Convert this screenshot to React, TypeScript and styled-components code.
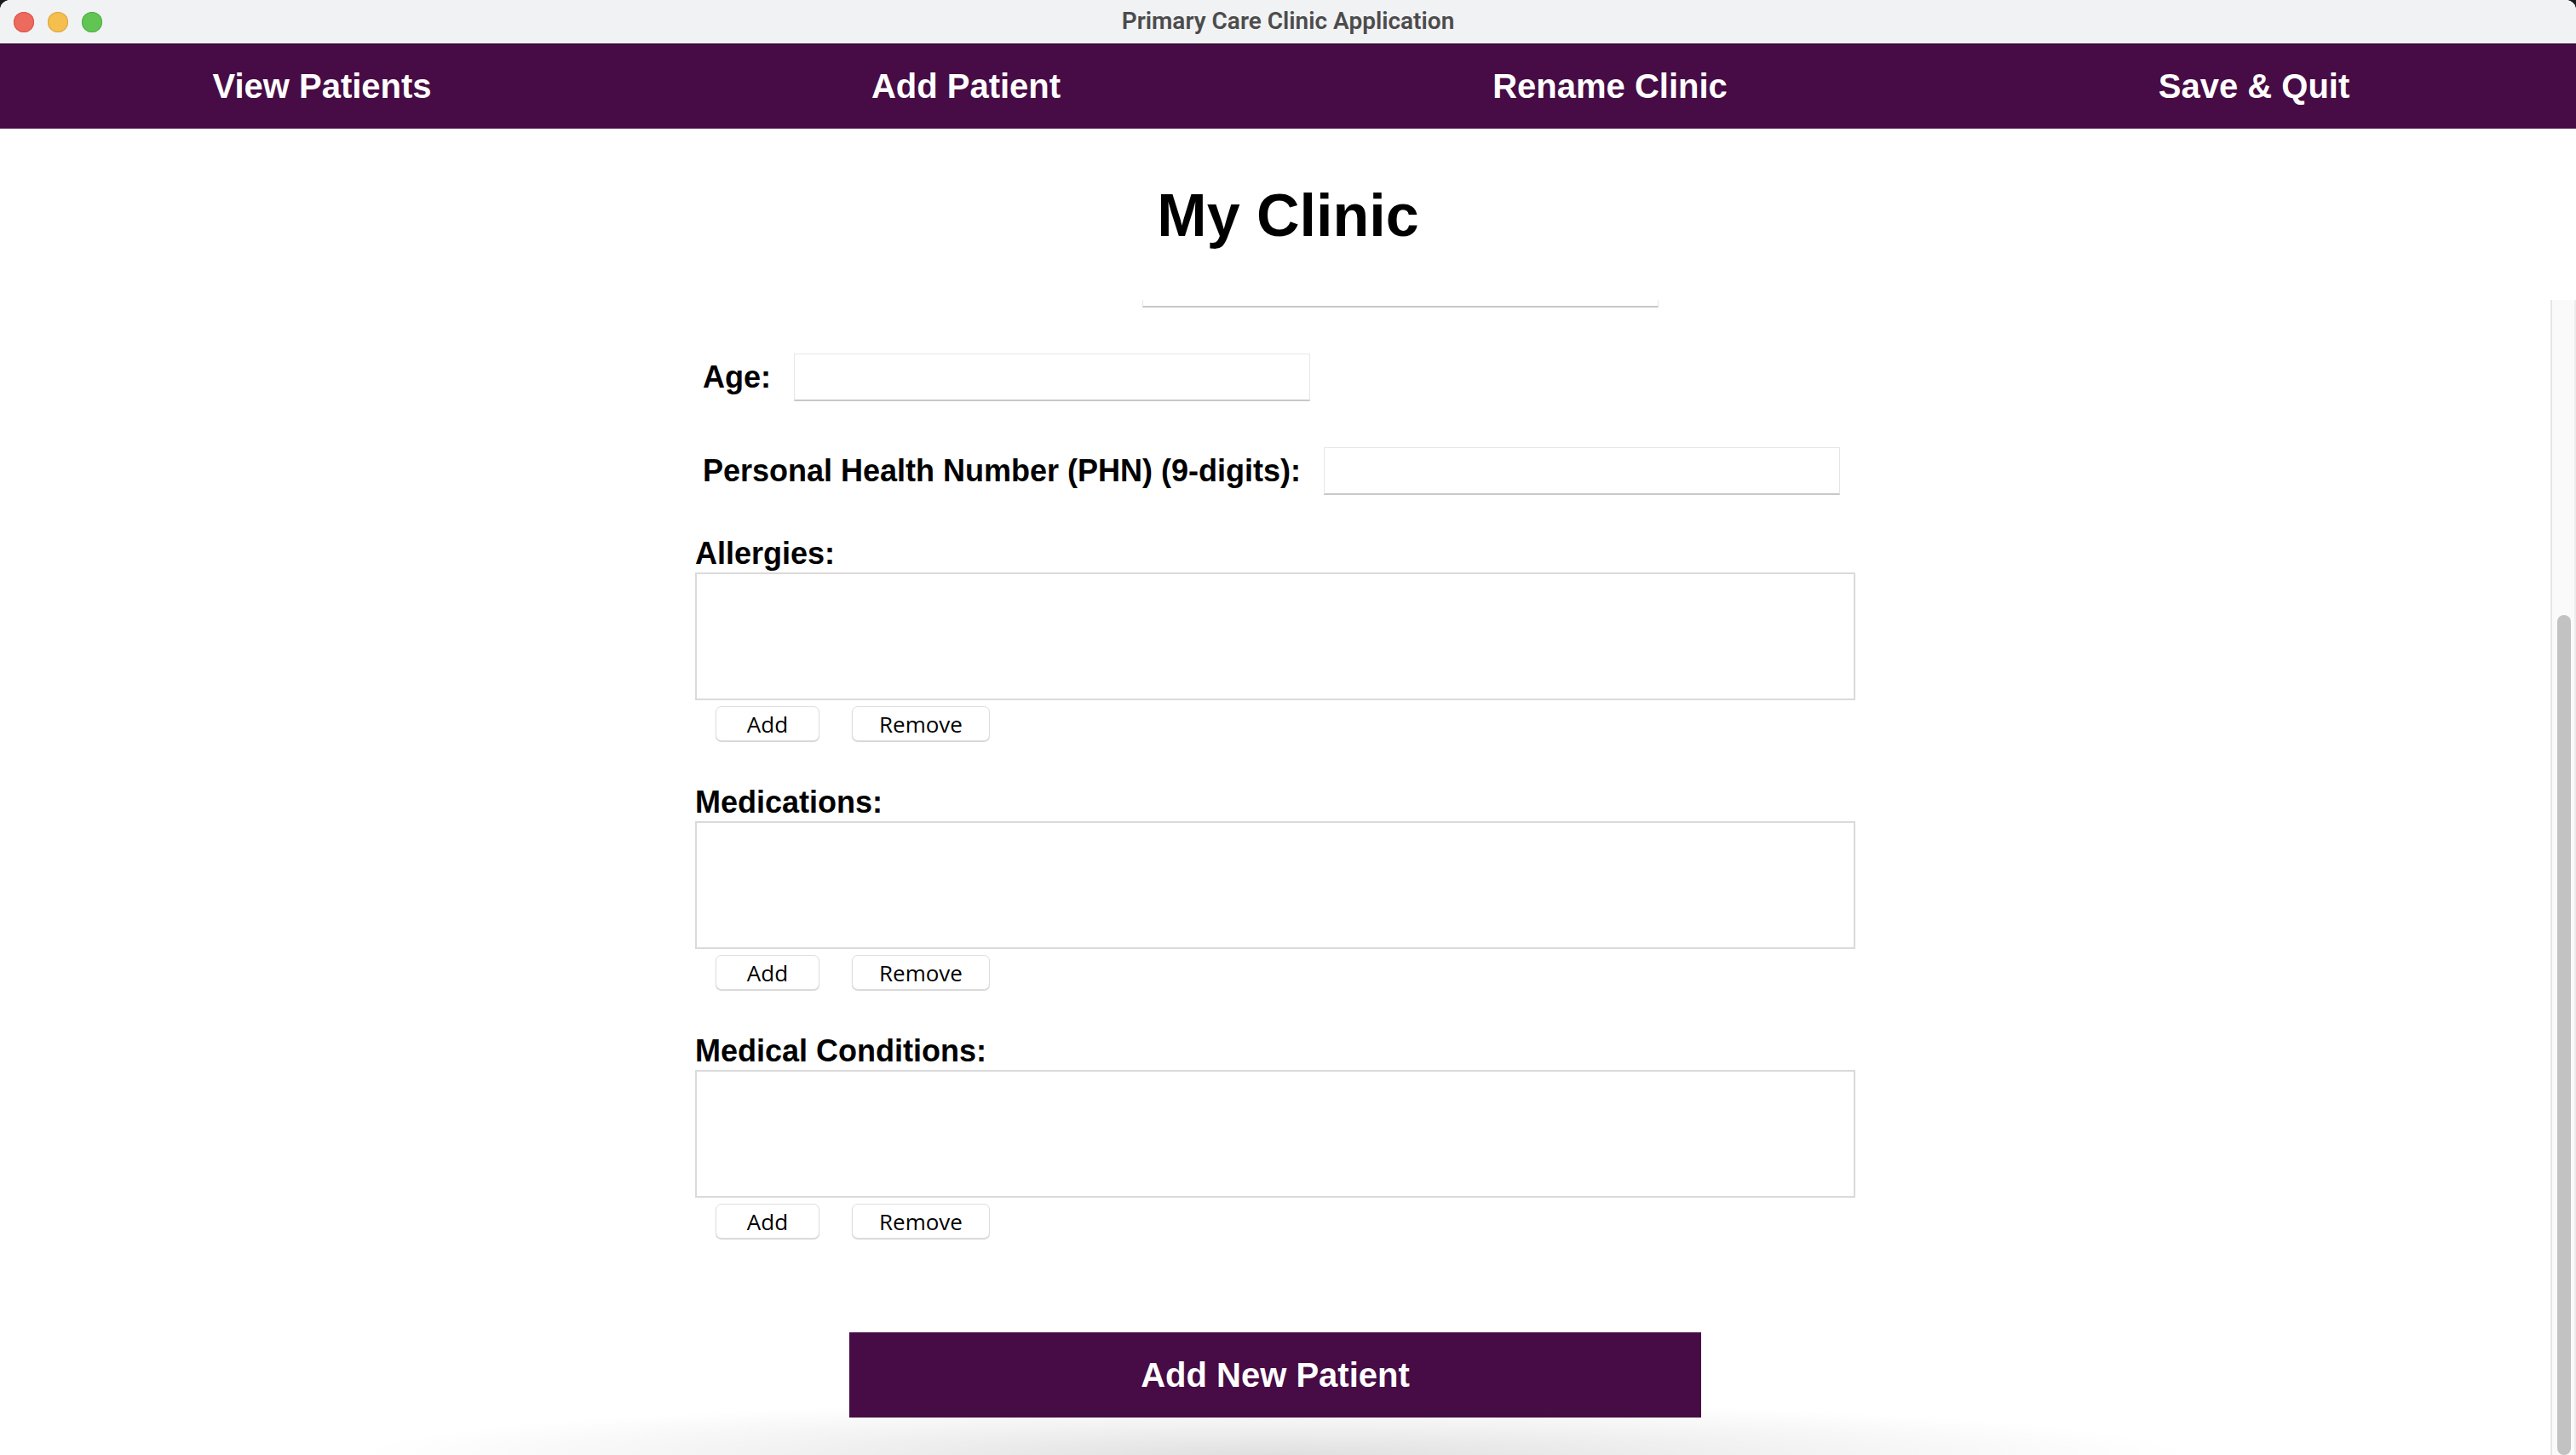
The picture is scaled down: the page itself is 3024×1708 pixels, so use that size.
import {useLayoutEffect, useRef, useState} from 'react';
import styled, {createGlobalStyle} from 'styled-components';

const purple = '#470c45';

const GlobalStyle = createGlobalStyle`
  html, body {
    margin: 0;
    height: 100%;
    background: #1b1b1b;
  }
  #root {
    height: 100%;
  }
  body {
    font-family: "Liberation Sans", Arial, sans-serif;
  }
`;

const Window = styled.div`
  height: 100vh;
  display: flex;
  flex-direction: column;
  background: #ffffff;
  border-radius: 12px 12px 0 0;
  overflow: hidden;
`;

const TitleBar = styled.div`
  height: 52px;
  flex-shrink: 0;
  display: grid;
  grid-template-columns: 1fr auto 1fr;
  align-items: center;
  padding: 0 16px;
  background: #f1f2f4;
  border-bottom: 1px solid #2a0627;
  box-sizing: border-box;
`;

const Lights = styled.div`
  display: flex;
  gap: 16px;
`;

const Light = styled.span<{color: string; edge: string}>`
  width: 24px;
  height: 24px;
  border-radius: 50%;
  background: ${p => p.color};
  box-shadow: inset 0 0 0 1px ${p => p.edge};
`;

const WindowTitle = styled.div`
  font-family: Roboto, "Liberation Sans", sans-serif;
  font-weight: 600;
  font-size: 28px;
  color: #4c4c4c;
  margin-top: -3px;
`;

const NavBar = styled.nav`
  height: 99px;
  flex-shrink: 0;
  display: grid;
  grid-template-columns: repeat(4, 1fr);
  align-items: center;
  background: ${purple};
`;

const NavItem = styled.button`
  background: none;
  border: none;
  color: #ffffff;
  font-family: "Liberation Sans", Arial, sans-serif;
  font-weight: 700;
  font-size: 40px;
  cursor: pointer;
`;

const HeadingArea = styled.header`
  height: 201px;
  flex-shrink: 0;
  box-sizing: border-box;
  padding-top: 62px;
  text-align: center;
  h1 {
    margin: 0;
    font-size: 70px;
    font-weight: 700;
    line-height: normal;
    color: #000;
  }
`;

const PaneWrap = styled.div`
  flex: 1;
  min-height: 0;
  display: flex;
  position: relative;
  &::after {
    content: '';
    position: absolute;
    left: 0;
    right: 30px;
    bottom: 0;
    height: 64px;
    pointer-events: none;
    background: radial-gradient(
      ellipse 36% 100% at 50% 100%,
      rgba(0, 0, 0, 0.12) 0%,
      rgba(0, 0, 0, 0.05) 55%,
      rgba(0, 0, 0, 0) 100%
    );
  }
`;

const ScrollPane = styled.div`
  flex: 1;
  min-width: 0;
  overflow-y: scroll;
  scrollbar-width: none;
  &::-webkit-scrollbar {
    display: none;
  }
`;

const ScrollTrack = styled.div`
  width: 30px;
  flex-shrink: 0;
  box-sizing: border-box;
  position: relative;
  background: #fafafa;
  border-left: 2px solid #e6e6e6;
  border-right: 2px solid #ececec;
`;

const ScrollThumb = styled.div`
  position: absolute;
  left: 6px;
  width: 16px;
  border-radius: 8px;
  background: #c2c2c2;
`;

const Content = styled.div`
  display: flex;
  flex-direction: column;
  align-items: center;
  padding: 22px 0 44px;
`;

const FieldGroup = styled.div`
  width: 1362px;
  box-sizing: border-box;
  padding-left: 9px;
  display: flex;
  flex-direction: column;
  align-items: flex-start;
  gap: 54px;
`;

const FieldRow = styled.div`
  display: flex;
  align-items: center;
  gap: 27px;
`;

const Label = styled.label`
  font-size: 36px;
  font-weight: 700;
  line-height: 40px;
  color: #000;
`;

const TextField = styled.input`
  width: 606px;
  height: 56px;
  box-sizing: border-box;
  border: 1px solid #e6e6e6;
  border-bottom: 2px solid #c8c8c8;
  background: #ffffff;
  outline: none;
`;

const Sections = styled.div`
  margin-top: 49px;
  display: flex;
  flex-direction: column;
  gap: 52px;
`;

const ListSection = styled.section`
  width: 1362px;
  display: flex;
  flex-direction: column;
  ${Label} {
    margin-bottom: 2px;
  }
`;

const ListBox = styled.textarea`
  display: block;
  width: 100%;
  height: 150px;
  box-sizing: border-box;
  border: 2px solid #dadada;
  resize: none;
  outline: none;
  background: #ffffff;
`;

const ButtonRow = styled.div`
  display: flex;
  gap: 38px;
  padding-left: 24px;
  margin-top: 7px;
`;

const SmallButton = styled.button`
  height: 41px;
  min-width: 122px;
  padding: 0 31px;
  box-sizing: border-box;
  font-family: "Open Sans", "Noto Sans", sans-serif;
  font-size: 26px;
  color: #000;
  background: #ffffff;
  border: 1px solid #dedede;
  border-radius: 7px;
  box-shadow: 0 1px 1px rgba(0, 0, 0, 0.18);
  display: flex;
  align-items: center;
  justify-content: center;
`;

const SubmitButton = styled.button`
  margin-top: 110px;
  width: 1000px;
  height: 100px;
  border: none;
  background: ${purple};
  color: #ffffff;
  font-family: "Liberation Sans", Arial, sans-serif;
  font-weight: 700;
  font-size: 40px;
`;

const hiddenFields = ['First Name:', 'Last Name:', 'Sex:', 'Address:', 'Date of Birth - YYYY-MM-DD:'];
const fields = [...hiddenFields, 'Age:', 'Personal Health Number (PHN) (9-digits):'];
const lists = ['Allergies:', 'Medications:', 'Medical Conditions:'];
const navItems = ['View Patients', 'Add Patient', 'Rename Clinic', 'Save & Quit'];

function App() {
  const paneRef = useRef<HTMLDivElement>(null);
  const [thumb, setThumb] = useState({top: 0, height: 0});

  const updateThumb = () => {
    const pane = paneRef.current;
    if (!pane) return;
    const track = pane.clientHeight;
    setThumb({
      top: (pane.scrollTop / pane.scrollHeight) * track,
      height: (pane.clientHeight / pane.scrollHeight) * track,
    });
  };

  useLayoutEffect(() => {
    const pane = paneRef.current;
    if (pane) {
      pane.scrollTop = pane.scrollHeight;
    }
    updateThumb();
  }, []);

  return (
    <Window>
      <GlobalStyle />
      <TitleBar>
        <Lights>
          <Light color="#ed6a5e" edge="#d6554a" />
          <Light color="#f5bf4f" edge="#d9a53c" />
          <Light color="#61c554" edge="#4fae43" />
        </Lights>
        <WindowTitle>Primary Care Clinic Application</WindowTitle>
        <div />
      </TitleBar>
      <NavBar>
        {navItems.map(item => (
          <NavItem key={item}>{item}</NavItem>
        ))}
      </NavBar>
      <HeadingArea>
        <h1>My Clinic</h1>
      </HeadingArea>
      <PaneWrap>
        <ScrollPane ref={paneRef} onScroll={updateThumb}>
          <Content>
            <FieldGroup>
              {fields.map(field => (
                <FieldRow key={field}>
                  <Label>{field}</Label>
                  <TextField type="text" />
                </FieldRow>
              ))}
            </FieldGroup>
            <Sections>
              {lists.map(list => (
                <ListSection key={list}>
                  <Label>{list}</Label>
                  <ListBox />
                  <ButtonRow>
                    <SmallButton>Add</SmallButton>
                    <SmallButton>Remove</SmallButton>
                  </ButtonRow>
                </ListSection>
              ))}
            </Sections>
            <SubmitButton>Add New Patient</SubmitButton>
          </Content>
        </ScrollPane>
        <ScrollTrack>
          <ScrollThumb style={{top: thumb.top, height: thumb.height}} />
        </ScrollTrack>
      </PaneWrap>
    </Window>
  );
}

export default App;
